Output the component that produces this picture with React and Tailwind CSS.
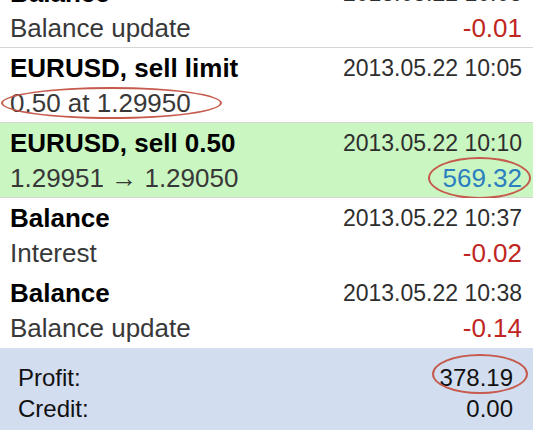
const rows = [
  { title: 'Balance', date: '2013.05.22 10:03', sub: 'Balance update', amount: '-0.01', tone: 'red' },
  { title: 'EURUSD, sell limit', date: '2013.05.22 10:05', sub: '0.50 at 1.29950', ring: 'left-[1px] top-[39px] h-[32px] w-[221px]' },
  { title: 'EURUSD, sell 0.50', date: '2013.05.22 10:10', sub: '1.29951 \u2192 1.29050', amount: '569.32', tone: 'blue', green: true, ring: 'left-[428px] top-[34px] h-[42px] w-[103px]' },
  { title: 'Balance', date: '2013.05.22 10:37', sub: 'Interest', amount: '-0.02', tone: 'red', noBorder: true },
  { title: 'Balance', date: '2013.05.22 10:38', sub: 'Balance update', amount: '-0.14', tone: 'red', noBorder: true },
]

// red hand-drawn annotation ellipse laid over the content
function Ring({ className }) {
  return <div className={`pointer-events-none absolute rounded-[50%] border-2 border-[#c65a4c] ${className}`} />
}

function Row({ row }) {
  const amountColor = row.tone === 'red' ? 'text-[#c0261f]' : 'text-[#2b7fc0]'
  return (
    <div
      className={`relative flex h-[75px] flex-col pl-[10px] pr-[11px] pt-[3px] ${row.green ? 'bg-[#c9f6c1]' : 'bg-white'} ${
        row.noBorder ? '' : 'border-b border-[#d6d6d6]'
      }`}
    >
      <div className="flex h-[35px] items-center justify-between">
        <span className="text-[26px] font-bold text-black">{row.title}</span>
        <span className="text-[23px] text-[#2e2e2e]">{row.date}</span>
      </div>
      <div className="flex h-[35px] items-center justify-between">
        <span className="text-[26px] text-[#383838]">{row.sub}</span>
        {row.amount && <span className={`text-[26px] ${amountColor}`}>{row.amount}</span>}
      </div>
      {row.ring && <Ring className={row.ring} />}
    </div>
  )
}

export default function App() {
  return (
    <div className="h-[430px] w-[533px] overflow-hidden bg-white font-['Liberation_Sans',Arial,sans-serif]">
      <div className="-mt-[27px]">
        {rows.map((row, i) => (
          <Row key={i} row={row} />
        ))}
      </div>
      <div className="relative h-[90px] bg-[#d2ddef] pl-[18px] pr-[20px] pt-[14px] text-[24px] text-[#111]">
        <div className="flex h-[31px] items-center justify-between">
          <span>Profit:</span>
          <span>378.19</span>
        </div>
        <div className="flex h-[31px] items-center justify-between">
          <span>Credit:</span>
          <span>0.00</span>
        </div>
        <Ring className="left-[432px] top-[6px] h-[40px] w-[96px]" />
      </div>
    </div>
  )
}
